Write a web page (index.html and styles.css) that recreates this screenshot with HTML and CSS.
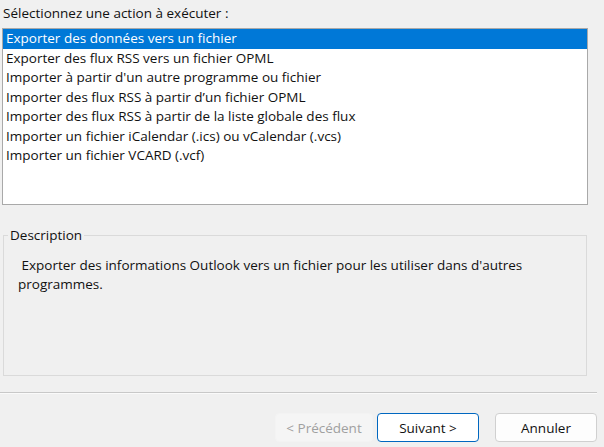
FILE: index.html
```html
<!DOCTYPE html>
<html lang="fr">
<head>
<meta charset="utf-8">
<title>Assistant Importation et exportation</title>
<link rel="stylesheet" href="styles.css">
</head>
<body>
<div class="dialog">
  <div class="prompt">Sélectionnez une action à exécuter :</div>
  <ul class="listbox">
    <li class="item selected">Exporter des données vers un fichier</li>
    <li class="item">Exporter des flux RSS vers un fichier OPML</li>
    <li class="item">Importer à partir d'un autre programme ou fichier</li>
    <li class="item">Importer des flux RSS à partir d’un fichier OPML</li>
    <li class="item">Importer des flux RSS à partir de la liste globale des flux</li>
    <li class="item">Importer un fichier iCalendar (.ics) ou vCalendar (.vcs)</li>
    <li class="item">Importer un fichier VCARD (.vcf)</li>
  </ul>
  <fieldset class="group">
    <legend class="group-label">Description</legend>
    <p class="desc">&nbsp;Exporter des informations Outlook vers un fichier pour les utiliser dans d'autres programmes.</p>
  </fieldset>
  <div class="separator"></div>
  <div class="buttons">
    <button class="btn disabled" disabled>&lt; Précédent</button>
    <button class="btn default">Suivant &gt;</button>
    <button class="btn cancel">Annuler</button>
  </div>
</div>
</body>
</html>
```
FILE: styles.css
```css
html, body {
  margin: 0;
  padding: 0;
  background: #f0f0f0;
}
body {
  font-family: "Open Sans", "Noto Sans", sans-serif;
  font-size: 13.5px;
  color: #111111;
  width: 604px;
  height: 447px;
  overflow: hidden;
}
.dialog {
  display: flex;
  flex-direction: column;
}
.prompt {
  height: 28px;
  line-height: 26px;
  padding-left: 3px;
}
.listbox {
  list-style: none;
  margin: 0 0 0 2px;
  padding: 0;
  width: 584px;
  height: 175px;
  border: 1px solid #a9a9a9;
  background: #ffffff;
}
.item {
  height: 19.5px;
  line-height: 19.5px;
  padding-left: 3px;
  white-space: nowrap;
}
.item.selected {
  background: #0078d7;
  color: #ffffff;
}
.group {
  margin: 21px 0 0 3px;
  padding: 0 0 0 14px;
  width: 568px;
  height: 148px;
  border: 1px solid #dadada;
  border-radius: 0;
  box-sizing: content-box;
}
.group-label {
  padding: 0 2px;
  margin-left: -10px;
  line-height: 18px;
}
.desc {
  margin: 12px 0 0 0;
  width: 530px;
  line-height: 18.5px;
}
.separator {
  margin-top: 16px;
  width: 597px;
  height: 1px;
  background: #c8c8c8;
  border-bottom: 1px solid #fafafa;
}
.buttons {
  display: flex;
  justify-content: flex-end;
  gap: 4px;
  padding-right: 7px;
  margin-top: 19px;
}
.btn {
  font-family: inherit;
  font-size: 13.5px;
  height: 29px;
  width: 102px;
  border-radius: 4px;
  border: 1px solid #d0d0d0;
  background: #fdfdfd;
  color: #111111;
  padding: 0;
}
.btn.disabled {
  width: 98px;
  background: #f5f5f5;
  border-color: #f3f3f3;
  color: #a0a0a0;
}
.btn.default {
  border: 1px solid #0067c0;
  background: #ffffff;
}
.btn.cancel {
  margin-left: 12px;
}
```
